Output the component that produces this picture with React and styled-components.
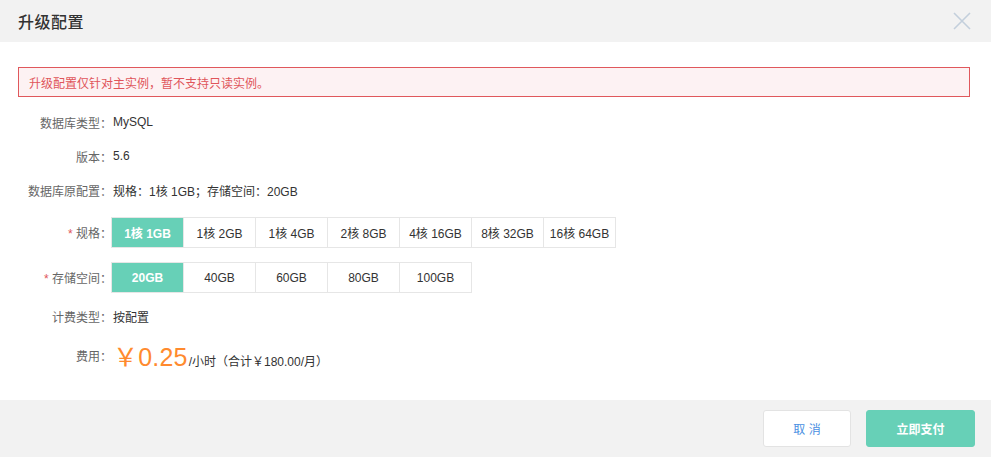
import React, { useState } from "react";
import styled, { createGlobalStyle } from "styled-components";

const GlobalStyle = createGlobalStyle`
  html, body {
    margin: 0;
    padding: 0;
    background: #fff;
    font-family: "Liberation Sans", "Noto Sans CJK SC", sans-serif;
  }
`;

const specs = ["1核 1GB", "1核 2GB", "1核 4GB", "2核 8GB", "4核 16GB", "8核 32GB", "16核 64GB"];
const disks = ["20GB", "40GB", "60GB", "80GB", "100GB"];

export default function App() {
  const [spec, setSpec] = useState(0);
  const [disk, setDisk] = useState(0);

  return (
    <Dialog>
      <GlobalStyle />
      <Header>
        <Title>升级配置</Title>
        <Close aria-label="close">
          <svg width="18" height="18" viewBox="0 0 18 18">
            <path d="M1 1L17 17M17 1L1 17" stroke="#c3cfdc" strokeWidth="1.6" fill="none" />
          </svg>
        </Close>
      </Header>

      <Body>
        <Alert>升级配置仅针对主实例，暂不支持只读实例。</Alert>

        <Row $mt={15}>
          <Label>数据库类型：</Label>
          <Value>MySQL</Value>
        </Row>
        <Row $mt={14}>
          <Label>版本：</Label>
          <Value>5.6</Value>
        </Row>
        <Row $mt={14}>
          <Label>数据库原配置：</Label>
          <Value>规格：1核 1GB；存储空间：20GB</Value>
        </Row>
        <Row $mt={17} $h={31}>
          <Label $required>规格：</Label>
          <Options>
            {specs.map((s, i) => (
              <Option key={s} $active={i === spec} onClick={() => setSpec(i)}>
                {s}
              </Option>
            ))}
          </Options>
        </Row>
        <Row $mt={14} $h={31}>
          <Label $required>存储空间：</Label>
          <Options>
            {disks.map((s, i) => (
              <Option key={s} $active={i === disk} onClick={() => setDisk(i)}>
                {s}
              </Option>
            ))}
          </Options>
        </Row>
        <Row $mt={13}>
          <Label>计费类型：</Label>
          <Value>按配置</Value>
        </Row>
        <Row $mt={14} $h={30}>
          <Label>费用：</Label>
          <Price>
            <Amount>￥0.25</Amount>
            <Unit>/小时（合计￥180.00/月）</Unit>
          </Price>
        </Row>
      </Body>

      <Footer>
        <Button>取 消</Button>
        <Button $primary>立即支付</Button>
      </Footer>
    </Dialog>
  );
}

const Dialog = styled.div`
  width: 991px;
  height: 457px;
  display: flex;
  flex-direction: column;
  background: #fff;
`;

const Header = styled.div`
  height: 42px;
  flex: none;
  background: #f2f2f2;
  display: flex;
  align-items: center;
  justify-content: space-between;
  padding: 0 20px 0 18px;
`;

const Title = styled.h3`
  margin: 0;
  font-size: 16px;
  font-weight: 500;
  color: #333;
  letter-spacing: 0.5px;
`;

const Close = styled.span`
  display: flex;
  cursor: pointer;
`;

const Body = styled.div`
  flex: 1;
  padding: 25px 21px 0 18px;
`;

const Alert = styled.div`
  height: 30px;
  box-sizing: border-box;
  border: 1px solid #e0585c;
  background: #fdf2f3;
  color: #e0555a;
  font-size: 12px;
  display: flex;
  align-items: center;
  padding-left: 10px;
`;

const Row = styled.div`
  display: flex;
  align-items: center;
  height: ${(p) => p.$h || 20}px;
  margin-top: ${(p) => p.$mt}px;
`;

const Label = styled.div`
  width: 94px;
  flex: none;
  text-align: right;
  font-size: 12px;
  color: #666;
  margin-right: 1px;

  &::before {
    content: ${(p) => (p.$required ? '"* "' : '""')};
    color: #e0555a;
  }
`;

const Value = styled.div`
  font-size: 12px;
  color: #333;
`;

const Options = styled.div`
  display: flex;
  margin-left: -2px;
  border: 1px solid #e6e6e6;
  border-right: none;
`;

const Option = styled.div`
  width: 72px;
  height: 29px;
  box-sizing: border-box;
  display: flex;
  align-items: center;
  justify-content: center;
  font-size: 12px;
  cursor: pointer;
  border-right: 1px solid #e6e6e6;
  color: ${(p) => (p.$active ? "#fff" : "#333")};
  background: ${(p) => (p.$active ? "#67d0b7" : "#fff")};
  font-weight: ${(p) => (p.$active ? "bold" : "normal")};
`;

const Price = styled.div`
  display: flex;
  align-items: baseline;
  margin-left: 0;
`;

const Amount = styled.span`
  font-size: 25px;
  color: #ff8a2e;
  letter-spacing: 0.2px;
`;

const Unit = styled.span`
  font-size: 12px;
  color: #333;
  margin-left: 1px;
`;

const Footer = styled.div`
  height: 57px;
  flex: none;
  background: #f2f2f2;
  display: flex;
  align-items: center;
  justify-content: flex-end;
  gap: 15px;
  padding-right: 16px;
`;

const Button = styled.button`
  height: 37px;
  width: ${(p) => (p.$primary ? 109 : 88)}px;
  border-radius: 3px;
  font-family: inherit;
  font-size: 12px;
  cursor: pointer;
  border: 1px solid ${(p) => (p.$primary ? "#67d0b7" : "#e3e3e3")};
  background: ${(p) => (p.$primary ? "#67d0b7" : "#fff")};
  color: ${(p) => (p.$primary ? "#fff" : "#4a8fe2")};
  font-weight: ${(p) => (p.$primary ? "bold" : "normal")};
`;
